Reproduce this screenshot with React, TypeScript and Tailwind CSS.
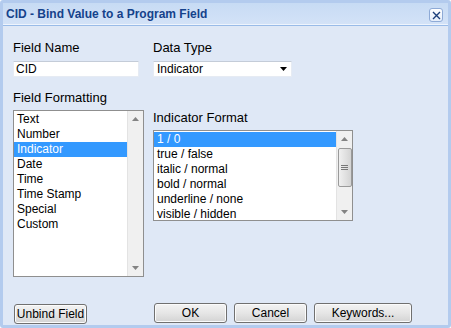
const fieldFormats = ["Text", "Number", "Indicator", "Date", "Time", "Time Stamp", "Special", "Custom"];
const indicatorFormats = ["1 / 0", "true / false", "italic / normal", "bold / normal", "underline / none", "visible / hidden"];

const UpArrow = () => (
  <svg width="7" height="4" viewBox="0 0 7 4">
    <path d="M0 4 L3.5 0 L7 4 Z" fill="#555" />
  </svg>
);

const DownArrow = ({ color = "#555" }: { color?: string }) => (
  <svg width="7" height="4" viewBox="0 0 7 4">
    <path d="M0 0 L7 0 L3.5 4 Z" fill={color} />
  </svg>
);

const Scrollbar = ({ thumb }: { thumb?: boolean }) => (
  <div className="w-[16px] h-full bg-[#f0f0f0] border-l border-[#e3e3e3] flex flex-col items-center">
    <div className="h-[16px] flex items-center justify-center opacity-70">
      <UpArrow />
    </div>
    {thumb ? (
      <div className="w-[14px] h-[39px] mt-[1px] rounded-[2px] border border-[#9a9a9a] bg-gradient-to-r from-[#f0f0f0] via-[#e2e2e2] to-[#d4d4d4] flex flex-col items-center justify-center gap-[1px]">
        <div className="w-[7px] h-[1px] bg-[#777]" />
        <div className="w-[7px] h-[1px] bg-[#777]" />
        <div className="w-[7px] h-[1px] bg-[#777]" />
      </div>
    ) : null}
    <div className="flex-1" />
    <div className="h-[16px] flex items-center justify-center opacity-70">
      <DownArrow />
    </div>
  </div>
);

const Button = ({ label, w }: { label: string; w: string }) => (
  <button
    className={`${w} h-[20px] rounded-[3px] border border-[#707070] bg-gradient-to-b from-[#f3f3f3] via-[#e6e6e6] to-[#d3d3d3] text-[12px] text-black leading-none shadow-[inset_0_0_0_1px_#fbfbfb]`}
  >
    {label}
  </button>
);

const App = () => {
  return (
    <div className="w-[451px] h-[328px] font-['Liberation_Sans',Arial,sans-serif] text-black">
      <div className="w-full h-full border-[3px] border-[#b3cbee] rounded-[3px] bg-[#dfe8f6] flex flex-col">
        <div className="h-[21px] bg-gradient-to-b from-[#c7dbf4] to-[#d3e2f7] flex items-center justify-between pl-[3px] pr-[5px]">
          <span className="text-[12px] font-bold text-[#15428b]">CID - Bind Value to a Program Field</span>
          <div className="w-[14px] h-[14px] mt-[3px] rounded-[3px] border border-[#8eaad6] bg-gradient-to-b from-white to-[#e4edfa] flex items-center justify-center">
            <svg width="9" height="9" viewBox="0 0 9 9">
              <path d="M1 1 L8 8 M8 1 L1 8" stroke="#1c3e7a" strokeWidth="1.4" />
            </svg>
          </div>
        </div>
        <div className="h-[1px] bg-[#eef4fd]" />
        <div className="h-[1px] bg-[#99bbe8]" />

        <div className="flex-1 px-[10px] pt-[14px] flex flex-col">
          <div className="flex gap-[10px]">
            <div className="w-[130px] flex flex-col">
              <label className="text-[13px] leading-[16px] h-[16px]">Field Name</label>
              <input
                defaultValue="CID"
                className="mt-[5px] w-[126px] h-[16px] bg-white border border-[#e6ebf3] border-t-[#c4ccd8] px-[2px] text-[12px] leading-none outline-none"
              />
              <label className="mt-[13px] text-[13px] leading-[16px] h-[16px]">Field Formatting</label>
              <div className="mt-[4px] w-[131px] h-[167px] bg-white border border-[#8f8f8f] flex">
                <div className="flex-1 pt-[1px]">
                  {fieldFormats.map((f) => (
                    <div
                      key={f}
                      className={`h-[15px] leading-[15px] pl-[3px] text-[12px] ${f === "Indicator" ? "bg-[#3399ff] text-white" : ""}`}
                    >
                      {f}
                    </div>
                  ))}
                </div>
                <Scrollbar />
              </div>
            </div>

            <div className="w-[200px] flex flex-col">
              <label className="text-[13px] leading-[16px] h-[16px]">Data Type</label>
              <div className="mt-[5px] w-[139px] h-[16px] bg-white border border-[#e6ebf3] border-t-[#c4ccd8] flex items-center justify-between pl-[3px] pr-[4px]">
                <span className="text-[12px] leading-none">Indicator</span>
                <DownArrow color="#000" />
              </div>
              <label className="mt-[33px] text-[13px] leading-[16px] h-[16px]">Indicator Format</label>
              <div className="mt-[4px] w-[200px] h-[91px] bg-white border border-[#8f8f8f] flex">
                <div className="flex-1 pt-[1px]">
                  {indicatorFormats.map((f) => (
                    <div
                      key={f}
                      className={`h-[15px] leading-[15px] pl-[3px] text-[12px] ${f === "1 / 0" ? "bg-[#3399ff] text-white" : ""}`}
                    >
                      {f}
                    </div>
                  ))}
                </div>
                <Scrollbar thumb />
              </div>
            </div>
          </div>

          <div className="mt-[24px] flex items-center">
            <div className="ml-[1px]">
              <Button label="Unbind Field" w="w-[73px]" />
            </div>
            <div className="ml-[67px] flex gap-[7px]">
              <Button label="OK" w="w-[73px]" />
              <Button label="Cancel" w="w-[73px]" />
              <Button label="Keywords..." w="w-[98px]" />
            </div>
          </div>
        </div>
      </div>
    </div>
  );
};

export default App;
